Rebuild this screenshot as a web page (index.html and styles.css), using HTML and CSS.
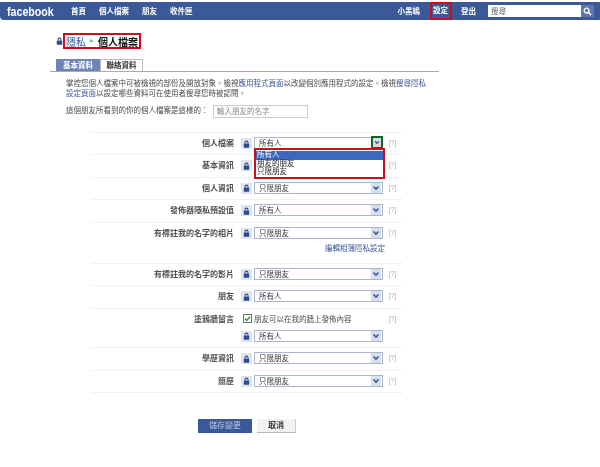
FILE: index.html
```html
<!DOCTYPE html>
<html lang="zh-Hant">
<head>
<meta charset="utf-8">
<title>隱私 - 個人檔案</title>
<link rel="stylesheet" href="styles.css">
<svg class="defs" width="0" height="0" aria-hidden="true">
  <symbol id="lock" viewBox="0 0 9 10"><path d="M2.6 4.5V3.2a1.9 1.9 0 0 1 3.8 0v1.3" fill="none" stroke="#2d4a8c" stroke-width="1.3"/><rect x="1" y="4.3" width="7" height="5.4" rx=".6" fill="#2d4a8c"/></symbol>
  <symbol id="chev" viewBox="0 0 12 10"><path d="M3 3.2 6 6.2 9 3.2" fill="none" stroke="#3b5998" stroke-width="2"/></symbol>
</svg>
</head>
<body>
<header class="topbar">
  <div class="logo-wrap"><div class="logo">facebook</div></div>
  <nav class="nav"><a>首頁</a><a>個人檔案</a><a>朋友</a><a>收件匣</a></nav>
  <nav class="nav nav-right"><a>小黑嶋</a><a class="marked">設定</a><a>登出</a></nav>
  <div class="search"><span class="search-input">搜尋</span><span class="search-btn"><svg width="9" height="9" viewBox="0 0 9 9"><circle cx="3.6" cy="3.6" r="2.4" fill="none" stroke="#fff" stroke-width="1.3"/><path d="M5.4 5.4 8 8" stroke="#fff" stroke-width="1.5"/></svg></span></div>
</header>
<main class="main">
  <div class="crumb"><svg class="crumb-lock"><use href="#lock"/></svg><div class="crumb-box"><a class="link">隱私</a><span class="crumb-arrow"></span><b>個人檔案</b></div></div>
  <div class="tabs"><span class="tab tab-on">基本資料</span><span class="tab">聯絡資料</span></div>
  <p class="intro">掌控您個人檔案中可被檢視的部份及開放對象。檢視<a class="link">應用程式頁面</a>以改變個別應用程式的設定。檢視<a class="link">搜尋隱私<br>設定頁面</a>以設定哪些資料可在使用者搜尋您時被認閱。</p>
  <div class="preview"><label>這個朋友所看到的你的個人檔案是這樣的：</label><span class="preview-input">輸入朋友的名字</span></div>
  <div class="list">
    <div class="row">
      <div class="label">個人檔案</div><span class="lock"><svg><use href="#lock"/></svg></span>
      <div class="select">所有人<span class="arrow arrow-marked"><svg><use href="#chev"/></svg></span>
        <div class="dropdown"><div class="opt opt-on">所有人</div><div class="opt">朋友的朋友</div><div class="opt">只限朋友</div></div>
      </div><span class="help">[?]</span>
    </div>
    <div class="row"><div class="label">基本資訊</div><span class="lock"><svg><use href="#lock"/></svg></span><div class="select">只限朋友<span class="arrow"><svg><use href="#chev"/></svg></span></div><span class="help">[?]</span></div>
    <div class="row"><div class="label">個人資訊</div><span class="lock"><svg><use href="#lock"/></svg></span><div class="select">只限朋友<span class="arrow"><svg><use href="#chev"/></svg></span></div><span class="help">[?]</span></div>
    <div class="row"><div class="label">發佈器隱私預設值</div><span class="lock"><svg><use href="#lock"/></svg></span><div class="select">所有人<span class="arrow"><svg><use href="#chev"/></svg></span></div><span class="help">[?]</span></div>
    <div class="row"><div class="label">有標註我的名字的相片</div><span class="lock"><svg><use href="#lock"/></svg></span><div class="select">只限朋友<span class="arrow"><svg><use href="#chev"/></svg></span></div><span class="help">[?]</span><a class="link edit">編輯相簿隱私設定</a></div>
    <div class="row"><div class="label">有標註我的名字的影片</div><span class="lock"><svg><use href="#lock"/></svg></span><div class="select">只限朋友<span class="arrow"><svg><use href="#chev"/></svg></span></div><span class="help">[?]</span></div>
    <div class="row"><div class="label">朋友</div><span class="lock"><svg><use href="#lock"/></svg></span><div class="select">所有人<span class="arrow"><svg><use href="#chev"/></svg></span></div><span class="help">[?]</span></div>
    <div class="row row-wall"><div class="label">塗鴉牆留言</div><span class="check"><svg width="9" height="9" viewBox="0 0 9 9"><rect x=".5" y=".5" width="8" height="8" fill="#fff" stroke="#5a7a5a"/><path d="M2 4.5 3.8 6.4 7 2.6" fill="none" stroke="#2f8a2f" stroke-width="1.4"/></svg></span><div class="check-text">朋友可以在我的牆上發佈內容</div><span class="help">[?]</span><span class="lock"><svg><use href="#lock"/></svg></span><div class="select">所有人<span class="arrow"><svg><use href="#chev"/></svg></span></div></div>
    <div class="row"><div class="label">學歷資訊</div><span class="lock"><svg><use href="#lock"/></svg></span><div class="select">只限朋友<span class="arrow"><svg><use href="#chev"/></svg></span></div><span class="help">[?]</span></div>
    <div class="row row-last"><div class="label">簡歷</div><span class="lock"><svg><use href="#lock"/></svg></span><div class="select">只限朋友<span class="arrow"><svg><use href="#chev"/></svg></span></div><span class="help">[?]</span></div>
  </div>
  <div class="actions"><span class="btn btn-save">儲存變更</span><span class="btn btn-cancel">取消</span></div>
</main>
</body>
</html>
```
FILE: styles.css
```css
* { box-sizing: border-box; }
html, body { margin: 0; padding: 0; background: #fff; }
body { font-family: "Liberation Sans", "Noto Sans CJK TC", sans-serif; font-size: 7.5px; color: #4a4a4a; height: 467px; overflow: hidden; filter: blur(.4px); }
.defs { position: absolute; }
.link { color: #3b5998; }

.topbar { margin-top: 2px; height: 18px; background: #3b5998; border-radius: 0 0 0 4px; display: flex; align-items: center; padding: 0 6px 0 7px; color: #fff; }
.logo-wrap { width: 64px; }
.logo { font: bold 13px "Liberation Sans", sans-serif; transform: scaleX(.82); transform-origin: left center; width: 58px; }
.nav { display: flex; align-items: center; gap: 13px; font-size: 7.5px; font-weight: bold; height: 18px; padding-bottom: 2px; }
.nav-right { margin-left: auto; }
.nav-right .marked { display: block; align-self: flex-start; height: 18px; border: 2px solid #c4111d; padding: 0 1.5px; margin: 0 -3.5px; line-height: 14px; }
.search { margin-left: 12px; display: flex; height: 12px; }
.search-input { width: 93px; background: #fff; color: #666; padding: 1px 3px; line-height: 11px; }
.search-btn { width: 13px; background: #5f78ab; display: flex; align-items: center; justify-content: center; }

.main { margin-left: 50px; width: 389px; }
.crumb { display: flex; align-items: center; margin: 13px 0 0 6px; }
.crumb-lock { width: 7px; height: 8px; }
.crumb-box { display: flex; align-items: center; border: 2px solid #c4111d; height: 16px; padding: 0 1px 0 1px; font-size: 10px; color: #111; }
.crumb-arrow { width: 0; height: 0; border-left: 4px solid #aaa; border-top: 2.5px solid transparent; border-bottom: 2.5px solid transparent; margin: 0 4px; }
.tabs { display: flex; margin: 10px 0 0 6px; height: 12px; }
.tab { width: 43px; height: 12px; text-align: center; line-height: 11px; font-weight: bold; border: 1px solid #bbb; border-bottom: 0; color: #333; }
.tab-on { width: 44px; background: #6d84b4; border-color: #6d84b4; color: #fff; }
.intro { margin: 0; border-top: 1px solid #aaa; padding: 7px 0 0 16px; line-height: 10px; white-space: nowrap; }
.preview { display: flex; align-items: flex-start; margin: 6px 0 0 16px; height: 14px; }
.preview label { width: 147px; line-height: 10px; padding-top: 1px; }
.preview-input { width: 95px; height: 13px; border: 1px solid #ccc; color: #888; padding: 0 3px; line-height: 11px; }

.list { margin: 13px 0 0 42px; width: 311px; }
.row { display: grid; grid-template-columns: 142px 20px 129px auto; align-items: center; border-top: 1px solid #f2f2f2; padding: 4px 0 5.4px; min-height: 22.4px; }
.row-last { border-bottom: 1px solid #f2f2f2; }
.label { text-align: right; font-size: 8px; font-weight: bold; color: #505050; line-height: 12px; white-space: nowrap; justify-self: end; align-self: start; padding-top: 1px; height: 12px; }
.lock { grid-column: 2; margin-left: 7px; width: 11px; height: 11px; margin-top: 1px; background: #dfe5ef; display: flex; align-items: center; justify-content: center; }
.lock svg { width: 7px; height: 8px; }
.select { grid-column: 3; position: relative; height: 12px; border: 1px solid #aab6cc; color: #333; padding-left: 4px; line-height: 12px; background: #fff; }
.arrow { position: absolute; right: 1px; top: 0; width: 10px; height: 10px; background: #d8dfea; display: flex; }
.arrow svg { width: 10px; height: 10px; }
.arrow-marked { right: -1px; top: -2px; width: 12px; height: 13px; border: 2px solid #0a6a20; }
.arrow-marked svg { width: 8px; height: 9px; }
.dropdown { position: absolute; left: -1px; top: 10px; width: 131px; height: 31px; border: 2px solid #c4111d; background: #fff; padding-top: 1px; z-index: 2; }
.opt { height: 8.5px; line-height: 8.5px; padding-left: 1px; color: #222; }
.opt-on { background: #3b69c0; color: #fff; }
.help { padding-left: 6px; color: #aaa; font-size: 6.5px; line-height: 12px; }
.edit { grid-column: 3; grid-row: 2; justify-self: end; white-space: nowrap; margin: 5px -2px 3px 0; line-height: 10px; height: 11px; }
.row-wall { row-gap: 5px; }
.check { grid-column: 2; margin-left: 9px; height: 9px; display: flex; }
.check-text { grid-column: 3; white-space: nowrap; line-height: 13px; height: 12px; }
.row-wall .help { grid-column: 4; }
.row-wall .lock { grid-row: 2; }
.row-wall .select { grid-row: 2; }
.actions { display: flex; gap: 5px; margin: 26px 0 0 148px; }
.btn { height: 14px; line-height: 14px; text-align: center; font-size: 8px; }
.btn-save { width: 54px; background: #3b5998; color: #b8c6e2; }
.btn-cancel { width: 39px; background: #f2f2f2; color: #333; border-bottom: 1px solid #bbb; border-right: 1px solid #ccc; line-height: 13px; font-weight: bold; }
```
